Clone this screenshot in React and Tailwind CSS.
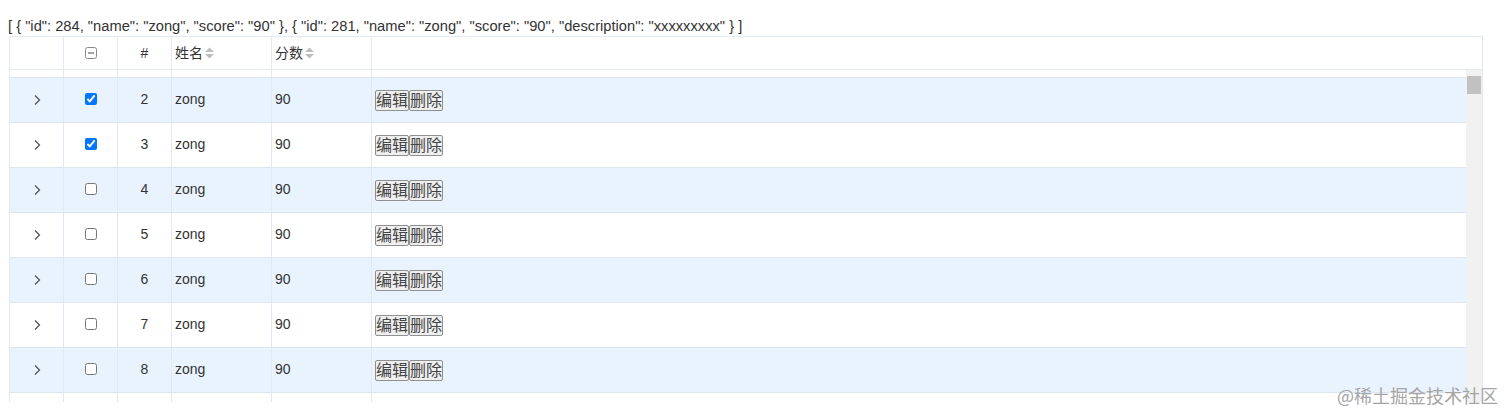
const rows = [2, 3, 4, 5, 6, 7, 8];
const checked = { 2: true, 3: true };

const font = "font-['Liberation_Sans','Noto_Sans_CJK_SC',sans-serif]";

function SortIcon() {
  return (
    <svg width="11" height="14" viewBox="0 0 11 14" className="ml-[1px]">
      <path d="M1 6 L5.5 1.5 L10 6 Z" fill="#bdbdbd" />
      <path d="M1 8 L5.5 12.5 L10 8 Z" fill="#bdbdbd" />
    </svg>
  );
}

function Chevron() {
  return (
    <svg width="8" height="12" viewBox="0 0 8 12">
      <path d="M2 1.5 L6.5 6 L2 10.5" fill="none" stroke="#555" strokeWidth="1.3" />
    </svg>
  );
}

function Cells({ row, bg, h }) {
  const line = "border-r border-[#e1e8f1]";
  return (
    <div className={`flex border-b border-[#dde6f0] ${bg} ${h}`}>
      <div className={`w-[54px] shrink-0 flex items-center justify-center pb-[1px] ${line}`}>{row && <Chevron />}</div>
      <div className={`w-[54px] shrink-0 flex items-center justify-center pb-[3px] ${line}`}>
        {row && <input type="checkbox" checked={!!checked[row]} readOnly className="w-[12px] h-[12px] m-0" />}
      </div>
      <div className={`w-[54px] shrink-0 flex items-center justify-center pb-[1px] ${line}`}>{row}</div>
      <div className={`w-[100px] shrink-0 flex items-center pl-[3px] pb-[1px] ${line}`}>{row && "zong"}</div>
      <div className={`w-[100px] shrink-0 flex items-center pl-[3px] pb-[1px] ${line}`}>{row && "90"}</div>
      <div className="flex-1 flex items-center pl-[3px]">
        {row && (
          <div className="flex">
            <button className="h-[21px] px-0 text-[16px] leading-[19px] text-[#444] bg-[#efefef] border border-[#8f8f8f] rounded-[2px]">编辑</button>
            <button className="h-[21px] px-0 text-[16px] leading-[19px] text-[#444] bg-[#efefef] border border-[#8f8f8f] rounded-[2px]">删除</button>
          </div>
        )}
      </div>
    </div>
  );
}

export default function App() {
  return (
    <div className={`relative h-[420px] bg-white pt-[17px] pl-[8px] text-[#333] text-[14px] ${font}`}>
      <div className="leading-[19px] text-[14.7px]">
        [ {"{"} "id": 284, "name": "zong", "score": "90" {"}"}, {"{"} "id": 281, "name": "zong", "score": "90", "description": "xxxxxxxxx" {"}"} ]
      </div>

      <div className="ml-[1px] w-[1474px] border-l border-r border-[#e1e8f1]">
        <div className="flex h-[34px] border-t border-b border-[#e4eaf1]">
          <div className="w-[54px] shrink-0 border-r border-[#e4eaf1]" />
          <div className="w-[54px] shrink-0 border-r border-[#e4eaf1] flex items-center justify-center">
            <svg width="12" height="12" viewBox="0 0 12 12">
              <rect x="0.5" y="0.5" width="11" height="11" rx="2" fill="white" stroke="#8a8a8a" />
              <path d="M3 6 H9" stroke="#666" strokeWidth="1.2" />
            </svg>
          </div>
          <div className="w-[54px] shrink-0 border-r border-[#e4eaf1] flex items-center justify-center">#</div>
          <div className="w-[100px] shrink-0 border-r border-[#e4eaf1] flex items-center pl-[3px]">姓名<SortIcon /></div>
          <div className="w-[100px] shrink-0 border-r border-[#e4eaf1] flex items-center pl-[3px]">分数<SortIcon /></div>
          <div className="flex-1" />
        </div>

        <div className="flex h-[332px] overflow-hidden">
          <div className="flex-1">
            <Cells h="h-[8px]" bg="bg-white" />
            {rows.map((r, i) => (
              <Cells key={r} row={r} h="h-[45px]" bg={i % 2 === 0 ? "bg-[#e9f3fe]" : "bg-white"} />
            ))}
            <div className="flex h-[45px]">
              <div className="w-[54px] shrink-0 border-r border-[#e1e8f1]" />
              <div className="w-[54px] shrink-0 border-r border-[#e1e8f1]" />
              <div className="w-[54px] shrink-0 border-r border-[#e1e8f1]" />
              <div className="w-[100px] shrink-0 border-r border-[#e1e8f1]" />
              <div className="w-[100px] shrink-0 border-r border-[#e1e8f1]" />
              <div className="flex-1" />
            </div>
          </div>
          <div className="w-[16px] shrink-0 bg-[#f1f1f1] pt-[6px] px-[1px]">
            <div className="h-[18px] bg-[#c1c1c1]" />
          </div>
        </div>
      </div>

      <div className="absolute right-[14px] top-[384px] text-[18px] leading-[22px] text-[#a5a5a5] font-['Noto_Sans_CJK_SC',sans-serif]">
        @稀土掘金技术社区
      </div>
    </div>
  );
}
